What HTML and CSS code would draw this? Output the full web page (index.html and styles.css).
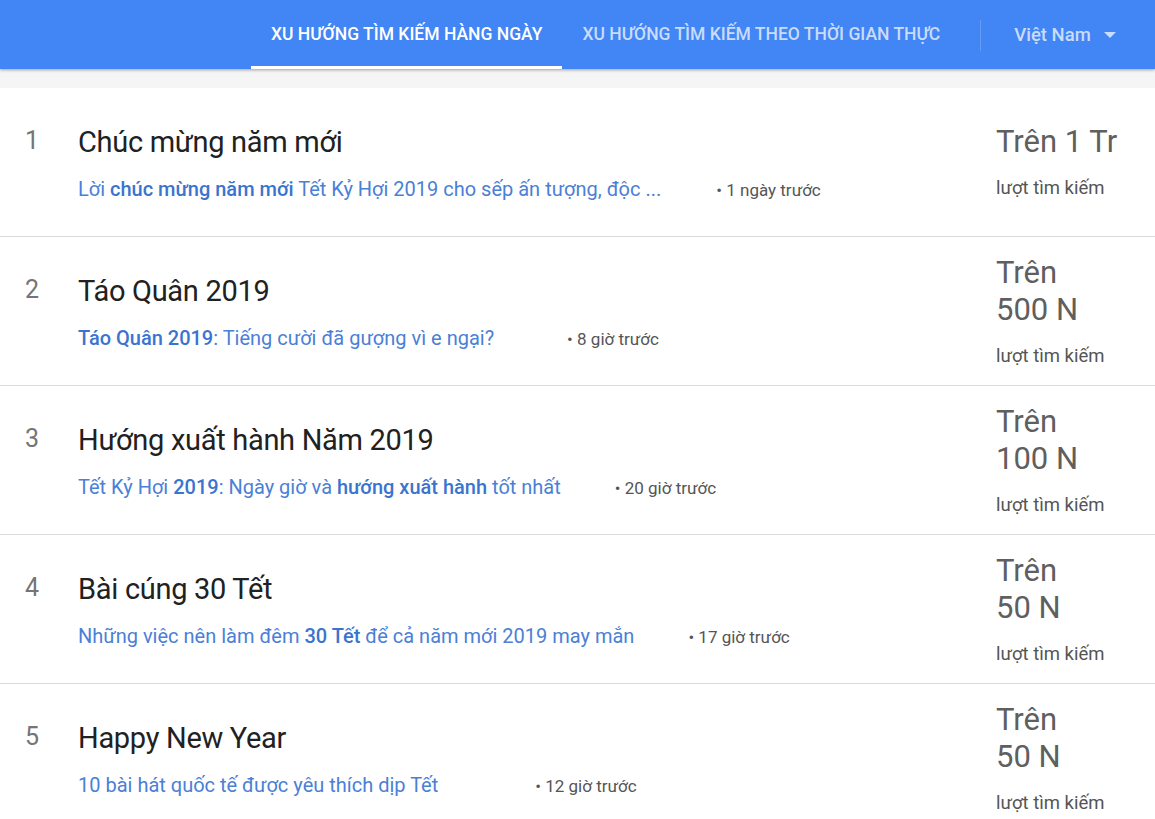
FILE: index.html
```html
<!DOCTYPE html>
<html lang="vi">
<head>
  <meta charset="UTF-8" />
  <meta name="viewport" content="width=device-width, initial-scale=1.0"/>
  <title>Xu hướng tìm kiếm hàng ngày</title>
  <link rel="stylesheet" href="styles.css">
</head>
<body>

  <nav class="topbar">
    <div class="tabs">
      <a class="tab active" href="#">Xu hướng tìm kiếm hàng ngày</a>
      <a class="tab" href="#">Xu hướng tìm kiếm theo thời gian thực</a>
    </div>
    <div class="divider"></div>
    <button class="geo">Việt Nam <span class="caret"></span></button>
  </nav>

  <div class="band"></div>

  <main class="list">
    <div class="row">
      <div class="rank">1</div>
      <div class="info">
        <div class="title">Chúc mừng năm mới</div>
        <div class="meta">
          <a class="story" href="#">Lời <b>chúc mừng năm mới</b> Tết Kỷ Hợi 2019 cho sếp ấn tượng, độc ...</a>
          <span class="src" style="width:55px"></span>
          <span class="time">• 1 ngày trước</span>
        </div>
      </div>
      <div class="count">
        <div class="num">Trên 1 Tr</div>
        <div class="label">lượt tìm kiếm</div>
      </div>
    </div>

    <div class="row">
      <div class="rank">2</div>
      <div class="info">
        <div class="title">Táo Quân 2019</div>
        <div class="meta">
          <a class="story" href="#"><b>Táo Quân 2019</b>: Tiếng cười đã gượng vì e ngại?</a>
          <span class="src" style="width:73px"></span>
          <span class="time">• 8 giờ trước</span>
        </div>
      </div>
      <div class="count">
        <div class="num">Trên<br>500 N</div>
        <div class="label">lượt tìm kiếm</div>
      </div>
    </div>

    <div class="row">
      <div class="rank">3</div>
      <div class="info">
        <div class="title">Hướng xuất hành Năm 2019</div>
        <div class="meta">
          <a class="story" href="#">Tết Kỷ Hợi <b>2019</b>: Ngày giờ và <b>hướng xuất hành</b> tốt nhất</a>
          <span class="src" style="width:54px"></span>
          <span class="time">• 20 giờ trước</span>
        </div>
      </div>
      <div class="count">
        <div class="num">Trên<br>100 N</div>
        <div class="label">lượt tìm kiếm</div>
      </div>
    </div>

    <div class="row">
      <div class="rank">4</div>
      <div class="info">
        <div class="title">Bài cúng 30 Tết</div>
        <div class="meta">
          <a class="story" href="#">Những việc nên làm đêm <b>30 Tết</b> để cả năm mới 2019 may mắn</a>
          <span class="src" style="width:54px"></span>
          <span class="time">• 17 giờ trước</span>
        </div>
      </div>
      <div class="count">
        <div class="num">Trên<br>50 N</div>
        <div class="label">lượt tìm kiếm</div>
      </div>
    </div>

    <div class="row">
      <div class="rank">5</div>
      <div class="info">
        <div class="title">Happy New Year</div>
        <div class="meta">
          <a class="story" href="#">10 bài hát quốc tế được yêu thích dịp Tết</a>
          <span class="src" style="width:97px"></span>
          <span class="time">• 12 giờ trước</span>
        </div>
      </div>
      <div class="count">
        <div class="num">Trên<br>50 N</div>
        <div class="label">lượt tìm kiếm</div>
      </div>
    </div>
  </main>

</body>
</html>
```

FILE: styles.css
```css
* {
  box-sizing: border-box;
}

body {
  margin: 0;
  font-family: Roboto, "Noto Sans", sans-serif;
  background: #fff;
  color: #212121;
  overflow: hidden;
}

.topbar {
  height: 69px;
  background: #4285f4;
  display: flex;
  align-items: stretch;
  padding-left: 251px;
  box-shadow: 0 1px 3px rgba(0, 0, 0, 0.35);
  position: relative;
  z-index: 1;
}

.tabs {
  display: flex;
}

.tab {
  display: flex;
  align-items: center;
  padding: 0 20px;
  color: rgba(255, 255, 255, 0.72);
  text-decoration: none;
  text-transform: uppercase;
  font-size: 17.5px;
  font-weight: 500;
  border-bottom: 3px solid transparent;
  padding-top: 1px;
}

.tab.active {
  color: #fff;
  border-bottom-color: #fff;
}

.divider {
  width: 1px;
  background: rgba(255, 255, 255, 0.18);
  margin: 20px 0 18px 20px;
}

.geo {
  background: none;
  border: none;
  font-family: inherit;
  font-size: 18.5px;
  font-weight: 500;
  color: rgba(255, 255, 255, 0.72);
  padding: 0 35px 0 33px;
  display: flex;
  align-items: center;
  gap: 13px;
}

.caret {
  width: 0;
  height: 0;
  border-left: 6px solid transparent;
  border-right: 6px solid transparent;
  border-top: 6px solid rgba(255, 255, 255, 0.72);
}

.band {
  height: 19px;
  background: #f5f5f5;
}

.row {
  height: 149px;
  display: flex;
  align-items: center;
  border-bottom: 1px solid #dadada;
  padding-left: 25px;
}

.rank {
  width: 53px;
  font-size: 25px;
  line-height: 30px;
  color: #757575;
  margin-top: -42px;
}

.info {
  flex: 1;
}

.title {
  font-size: 29px;
  line-height: 36px;
  color: #212121;
  letter-spacing: -0.3px;
}

.meta {
  margin-top: 17px;
  display: flex;
  align-items: baseline;
}

.story {
  font-size: 20px;
  color: #4a80d6;
  text-decoration: none;
}

.story b {
  font-weight: 500;
  color: #3b74cf;
}

.src {
  display: inline-block;
}

.time {
  font-size: 17px;
  color: #555;
}

.count {
  width: 159px;
  color: #5f5f5f;
  padding-bottom: 2px;
}

.num {
  font-size: 31px;
  line-height: 37px;
}

.label {
  margin-top: 17px;
  font-size: 18.5px;
  color: #555;
}
```
